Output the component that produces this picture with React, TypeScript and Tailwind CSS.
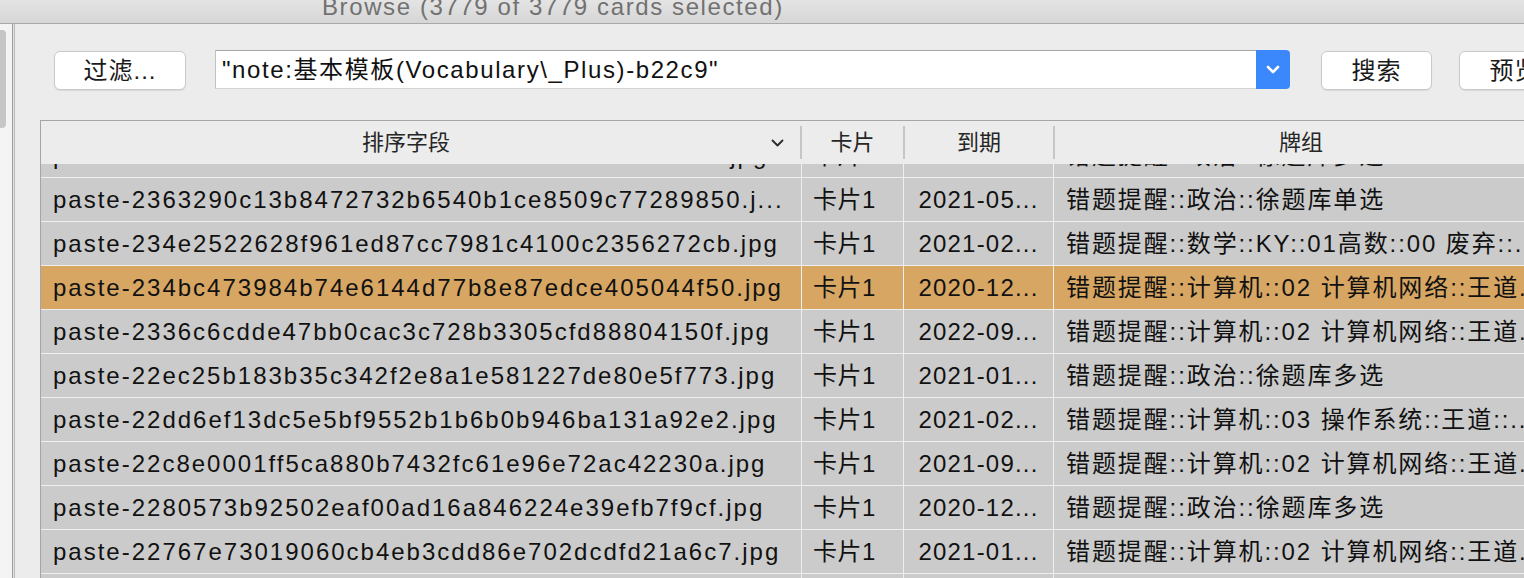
import React from "react";

type R = { f: string; c: string; d: string; k: string; sel?: boolean };

const rows: R[] = [
  { f: "paste-2363290c13b8472732b6540b1ce8509c77289850.j...", c: "卡片1", d: "2021-05...", k: "错题提醒::政治::徐题库单选" },
  { f: "paste-234e2522628f961ed87cc7981c4100c2356272cb.jpg", c: "卡片1", d: "2021-02...", k: "错题提醒::数学::KY::01高数::00 废弃::..." },
  { f: "paste-234bc473984b74e6144d77b8e87edce405044f50.jpg", c: "卡片1", d: "2020-12...", k: "错题提醒::计算机::02 计算机网络::王道...", sel: true },
  { f: "paste-2336c6cdde47bb0cac3c728b3305cfd88804150f.jpg", c: "卡片1", d: "2022-09...", k: "错题提醒::计算机::02 计算机网络::王道..." },
  { f: "paste-22ec25b183b35c342f2e8a1e581227de80e5f773.jpg", c: "卡片1", d: "2021-01...", k: "错题提醒::政治::徐题库多选" },
  { f: "paste-22dd6ef13dc5e5bf9552b1b6b0b946ba131a92e2.jpg", c: "卡片1", d: "2021-02...", k: "错题提醒::计算机::03 操作系统::王道::..." },
  { f: "paste-22c8e0001ff5ca880b7432fc61e96e72ac42230a.jpg", c: "卡片1", d: "2021-09...", k: "错题提醒::计算机::02 计算机网络::王道..." },
  { f: "paste-2280573b92502eaf00ad16a846224e39efb7f9cf.jpg", c: "卡片1", d: "2020-12...", k: "错题提醒::政治::徐题库多选" },
  { f: "paste-22767e73019060cb4eb3cdd86e702dcdfd21a6c7.jpg", c: "卡片1", d: "2021-01...", k: "错题提醒::计算机::02 计算机网络::王道..." },
  { f: "paste-2263a1f0b7c94d2e5a8f1c3b6d0e9a7f4c2b8d15.jpg", c: "卡片1", d: "2021-03...", k: "错题提醒::政治::徐题库单选" },
];

function Row({ r, first }: { r: R; first?: boolean }) {
  return (
    <div
      className={`flex h-[44px] shrink-0 border-b border-[#efefef] text-[24px] text-[#111] ${
        r.sel ? "bg-[#d7a663]" : "bg-[#cbcbcb]"
      } ${first ? "-mt-[30px]" : ""}`}
    >
      <div className="flex w-[761px] shrink-0 items-center overflow-hidden whitespace-nowrap border-r border-[#efefef] pl-[12px] tracking-[2px]">
        {r.f}
      </div>
      <div className="flex w-[102px] shrink-0 items-center whitespace-nowrap border-r border-[#efefef] pl-[11px] tracking-[0.5px]">
        {r.c}
      </div>
      <div className="flex w-[150px] shrink-0 items-center justify-center whitespace-nowrap border-r border-[#efefef] tracking-[1.2px]">
        {r.d}
      </div>
      <div className="flex flex-1 items-center whitespace-nowrap pl-[12px] tracking-[1.9px]">{r.k}</div>
    </div>
  );
}

function Btn({ children, w }: { children: React.ReactNode; w: string }) {
  return (
    <div
      className={`${w} mt-[1px] flex h-[39px] shrink-0 items-center justify-center rounded-[6px] border border-[#c9c9c9] bg-white text-[24px] tracking-[1px] text-[#1a1a1a] shadow-[0_1px_1px_rgba(0,0,0,0.08)]`}
    >
      {children}
    </div>
  );
}

export default function App() {
  const top: R = {
    f: "paste-23a0f9e0c7d5b1c2e4a8f6b3d9e7c5a1b0f2d4e6.jpg",
    c: "卡片1",
    d: "",
    k: "错题提醒::政治::徐题库多选",
  };
  return (
    <div className="flex h-[578px] w-[1524px] flex-col overflow-hidden bg-[#ececec] font-['Liberation_Sans','Noto_Sans_CJK_SC',sans-serif]">
      {/* title bar */}
      <div className="flex h-[24px] shrink-0 overflow-hidden border-b border-[#a9a9a9] bg-gradient-to-b from-[#e4e4e4] to-[#d6d6d6] pl-[322px]">
        <div className="-mt-[5px] whitespace-nowrap text-[24px] leading-[24px] tracking-[1.6px] text-[#717171]">
          Browse (3779 of 3779 cards selected)
        </div>
      </div>

      <div className="flex min-h-0 flex-1">
        {/* left sidebar */}
        <div className="flex w-[12px] shrink-0 flex-col bg-[#f4f4f4] pt-[6px]">
          <div className="h-[98px] w-[6px] rounded-r-[4px] bg-[#c6c6c6]" />
        </div>
        <div className="w-[3px] shrink-0 border-x border-l-[#9c9c9c] border-r-[#b9b9b9] bg-[#e4e4e4]" />

        {/* main */}
        <div className="flex min-w-0 flex-1 flex-col overflow-hidden">
          {/* toolbar */}
          <div className="flex h-[96px] shrink-0 items-start pl-[39px] pt-[26px]">
            <Btn w="w-[132px]">过滤...</Btn>
            <div className="ml-[29px] flex h-[39px] w-[1075px] shrink-0">
              <div className="flex flex-1 items-center whitespace-nowrap border border-b-[#d4d4d4] border-l-[#c2c2c2] border-r-0 border-t-[#a6a6a6] bg-white pl-[6px] text-[24px] tracking-[1.6px] text-[#111]">
                "note:基本模板(Vocabulary\_Plus)-b22c9"
              </div>
              <div className="flex w-[34px] items-center justify-center rounded-r-[4px] bg-[#3b88fd]">
                <svg width="14" height="9" viewBox="0 0 14 9">
                  <path d="M2 2 L7 7 L12 2" fill="none" stroke="white" strokeWidth="2.6" strokeLinecap="round" strokeLinejoin="round" />
                </svg>
              </div>
            </div>
            <div className="ml-[31px]">
              <Btn w="w-[111px]">搜索</Btn>
            </div>
            <div className="ml-[27px]">
              <Btn w="w-[111px]">预览</Btn>
            </div>
          </div>

          {/* table */}
          <div className="ml-[25px] flex min-h-0 w-[1520px] flex-1 flex-col border-l border-t border-[#a5a5a5]">
            <div className="flex h-[43px] shrink-0 items-center bg-[#ececec] text-[22px] text-[#262626]">
              <div className="flex w-[759px] shrink-0 items-center">
                <div className="flex-1 text-center">排序字段</div>
                <svg className="mr-[16px]" width="13" height="8" viewBox="0 0 13 8">
                  <path d="M1.5 1.5 L6.5 6.5 L11.5 1.5" fill="none" stroke="#2a2a2a" strokeWidth="1.8" strokeLinecap="round" strokeLinejoin="round" />
                </svg>
              </div>
              <div className="h-[33px] w-[2px] shrink-0 bg-[#c6c6c6]" />
              <div className="w-[101px] shrink-0 text-center">卡片</div>
              <div className="h-[33px] w-[2px] shrink-0 bg-[#c6c6c6]" />
              <div className="w-[148px] shrink-0 text-center">到期</div>
              <div className="h-[33px] w-[2px] shrink-0 bg-[#c6c6c6]" />
              <div className="w-[492px] shrink-0 text-center">牌组</div>
            </div>
            <div className="flex min-h-0 flex-1 flex-col overflow-hidden">
              <Row r={top} first />
              {rows.map((r, i) => (
                <Row key={i} r={r} />
              ))}
            </div>
          </div>
        </div>
      </div>
    </div>
  );
}
